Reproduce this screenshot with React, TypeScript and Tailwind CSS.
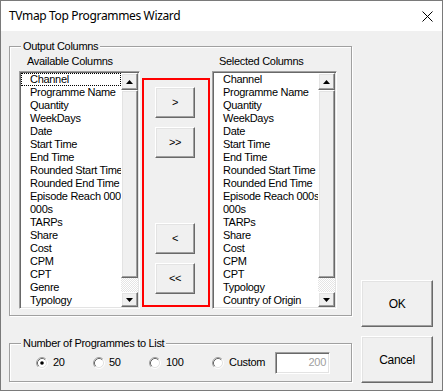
import * as React from 'react';

const available = [
  'Channel',
  'Programme Name',
  'Quantity',
  'WeekDays',
  'Date',
  'Start Time',
  'End Time',
  'Rounded Start Time',
  'Rounded End Time',
  'Episode Reach 000s',
  '000s',
  'TARPs',
  'Share',
  'Cost',
  'CPM',
  'CPT',
  'Genre',
  'Typology',
];

const selected = [
  'Channel',
  'Programme Name',
  'Quantity',
  'WeekDays',
  'Date',
  'Start Time',
  'End Time',
  'Rounded Start Time',
  'Rounded End Time',
  'Episode Reach 000s',
  '000s',
  'TARPs',
  'Share',
  'Cost',
  'CPM',
  'CPT',
  'Typology',
  'Country of Origin',
];

// classic 3D raised edge, used for buttons and scrollbar parts
const raised =
  'border border-t-white border-l-white border-r-[#696969] border-b-[#696969] bg-[#f0f0f0] shadow-[inset_-1px_-1px_0_#a0a0a0,inset_1px_1px_0_#e3e3e3]';

const sunken =
  'border border-t-[#a0a0a0] border-l-[#a0a0a0] border-r-white border-b-white p-[1px] shadow-[inset_1px_1px_0_#696969,inset_-1px_-1px_0_#e3e3e3]';

function Arrow({ down }: { down?: boolean }) {
  return (
    <svg width="7" height="4" viewBox="0 0 7 4">
      <polygon points={down ? '0,0 7,0 3.5,4' : '0,4 7,4 3.5,0'} fill="#000" />
    </svg>
  );
}

function ScrollBar() {
  return (
    <div className="flex w-[17px] shrink-0 flex-col">
      <div className={`flex h-[17px] items-center justify-center ${raised}`}>
        <Arrow />
      </div>
      <div className={`h-[188px] ${raised}`} />
      <div className="h-[14px] bg-[repeating-conic-gradient(#ffffff_0_25%,#e4e4e4_0_50%)] bg-[length:2px_2px]" />
      <div className={`flex h-[15px] items-center justify-center ${raised}`}>
        <Arrow down />
      </div>
    </div>
  );
}

function ListBox({ items, className, focus }: { items: string[]; className: string; focus?: boolean }) {
  return (
    <div className={`flex h-[238px] bg-white ${sunken} ${className}`}>
      <div className="min-w-0 flex-1 overflow-hidden bg-white">
        {items.map((it, i) =>
          focus && i === 0 ? (
            <div
              key={it}
              className="h-[13px] whitespace-nowrap border border-dotted border-black pl-[8px] leading-[11px]"
            >
              {it}
            </div>
          ) : (
            <div key={it} className="h-[13px] whitespace-nowrap pl-[9px] leading-[13px]">
              {it}
            </div>
          ),
        )}
      </div>
      <ScrollBar />
    </div>
  );
}

function Radio({ checked }: { checked?: boolean }) {
  return (
    <svg width="12" height="12" viewBox="0 0 12 12" className="shrink-0">
      <circle cx="6" cy="6" r="4.5" fill="#fff" />
      <path d="M2.11 9.89 A5.5 5.5 0 0 1 9.89 2.11" fill="none" stroke="#a0a0a0" />
      <path d="M9.89 2.11 A5.5 5.5 0 0 1 2.11 9.89" fill="none" stroke="#fff" />
      <path d="M2.82 9.18 A4.5 4.5 0 0 1 9.18 2.82" fill="none" stroke="#696969" />
      <path d="M9.18 2.82 A4.5 4.5 0 0 1 2.82 9.18" fill="none" stroke="#e3e3e3" />
      {checked && <circle cx="6" cy="6" r="1.8" fill="#000" />}
    </svg>
  );
}

function GroupBox({ title, className, children }: { title: string; className: string; children: React.ReactNode }) {
  return (
    <div
      className={`relative border border-[#a0a0a0] shadow-[inset_1px_1px_0_#fff,1px_1px_0_#fff] ${className}`}
    >
      <span className="absolute -top-[7px] left-[11px] bg-[#f0f0f0] px-[2px] leading-[13px]">{title}</span>
      {children}
    </div>
  );
}

function ArrowButton({ label }: { label: string }) {
  return (
    <div className={`flex h-[31px] w-[40px] items-center justify-center ${raised}`}>{label}</div>
  );
}

export default function App() {
  return (
    <div className="flex h-[391px] w-[443px] flex-col border border-[#7a7a7a] bg-[#f0f0f0] font-['Liberation_Sans',Arial,sans-serif] text-[11px] tracking-[-0.3px] text-black">
      <div className="flex h-[30px] shrink-0 items-center justify-between bg-white pl-[8px] pr-[9px]">
        <span className="font-['Segoe_UI','Noto_Sans',sans-serif] text-[12px] tracking-[-0.35px]">
          TVmap Top Programmes Wizard
        </span>
        <svg width="11" height="11" viewBox="0 0 11 11">
          <path d="M0.5 0.5 L10.5 10.5 M10.5 0.5 L0.5 10.5" stroke="#000" strokeWidth="1" />
        </svg>
      </div>

      <div className="flex flex-1 items-end gap-[9px] pb-[8px] pl-[8px]">
        <div className="flex flex-col gap-[27px]">
          <GroupBox title="Output Columns" className="flex h-[270px] w-[343px] items-start pl-[9px]">
            <div className="flex flex-col pt-[8px]">
              <div className="mb-[3px] pl-[8px] leading-[13px]">Available Columns</div>
              <ListBox items={available} className="w-[121px]" focus />
            </div>
            <div className="ml-[2px] mt-[31px] flex h-[229px] w-[68px] flex-col border-2 border-[#ff0000] pl-[11px] pt-[7px]">
              <ArrowButton label=">" />
              <div className="mt-[9px]">
                <ArrowButton label=">>" />
              </div>
              <div className="mt-[65px]">
                <ArrowButton label="<" />
              </div>
              <div className="mt-[9px]">
                <ArrowButton label="<<" />
              </div>
            </div>
            <div className="ml-[2px] flex flex-col pt-[8px]">
              <div className="mb-[3px] pl-[7px] leading-[13px]">Selected Columns</div>
              <ListBox items={selected} className="w-[125px]" />
            </div>
          </GroupBox>

          <GroupBox title="Number of Programmes to List" className="flex h-[39px] w-[343px] items-center pl-[26px]">
            <div className="flex w-[57px] items-center gap-[5px]">
              <Radio checked />
              <span>20</span>
            </div>
            <div className="flex w-[56px] items-center gap-[4px]">
              <Radio />
              <span>50</span>
            </div>
            <div className="flex w-[63px] items-center gap-[5px]">
              <Radio />
              <span>100</span>
            </div>
            <div className="flex w-[63px] items-center gap-[5px]">
              <Radio />
              <span>Custom</span>
            </div>
            <div className={`flex h-[22px] w-[55px] items-center justify-end bg-white pr-[3px] text-[#a0a0a0] ${sunken}`}>
              200
            </div>
          </GroupBox>
        </div>

        <div className="-mb-[1px] flex w-[72px] flex-col gap-[9px]">
          <div className={`flex h-[47px] items-center justify-center text-[12px] ${raised}`}>OK</div>
          <div className={`flex h-[47px] items-center justify-center text-[12px] ${raised}`}>Cancel</div>
        </div>
      </div>
    </div>
  );
}
